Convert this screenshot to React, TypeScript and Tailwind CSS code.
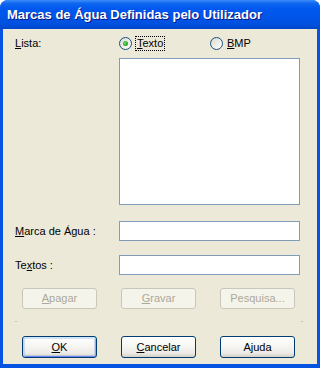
import React from "react";

const font = { fontFamily: '"Liberation Sans", Arial, sans-serif' };

function Radio({ checked }: { checked?: boolean }) {
  return (
    <span className="relative inline-flex h-[13px] w-[13px] shrink-0 items-center justify-center rounded-full border border-[#1C5180] bg-[linear-gradient(135deg,#D9D9D1_0%,#F0F0EA_55%,#FFFFFF_100%)]">
      {checked && (
        <span className="h-[5px] w-[5px] rounded-full bg-[radial-gradient(circle_at_40%_40%,#6CDB6C_0%,#21A121_70%,#1A8A1A_100%)]" />
      )}
    </span>
  );
}

function Btn({
  children,
  disabled,
  def,
  h = "h-[21px]",
}: {
  children: React.ReactNode;
  disabled?: boolean;
  def?: boolean;
  h?: string;
}) {
  if (disabled) {
    return (
      <div
        className={`flex w-[75px] ${h} items-center justify-center rounded-[3px] border border-[#C9C7BA] bg-[#F5F4EA] text-[11px] text-[#ACA899]`}
      >
        {children}
      </div>
    );
  }
  return (
    <div
      className={`flex w-[75px] ${h} items-center justify-center rounded-[3px] border border-[#003C74] bg-[linear-gradient(180deg,#FFFFFF_0%,#F7F7F4_40%,#ECEBE6_80%,#D6D0C5_100%)] text-[11px] text-black ${
        def
          ? "shadow-[inset_0_1px_0_#CEE7FF,inset_1px_0_0_#BCD4F6,inset_-1px_0_0_#89ADE4,inset_0_-1px_0_#6982EE,inset_0_0_0_2px_rgba(137,173,228,0.35)]"
          : ""
      }`}
    >
      {children}
    </div>
  );
}

export default function App() {
  return (
    <div className="h-[368px] w-[320px] bg-white" style={font}>
      <div className="flex h-[368px] w-[320px] flex-col overflow-hidden rounded-t-[8px] bg-[#0553E1]">
        <div className="flex h-[29px] shrink-0 items-center bg-[linear-gradient(180deg,#3C8CF8_0%,#0E66F0_12%,#0058EE_30%,#0055E8_60%,#0050DD_85%,#0046C8_100%)] pl-[7px]">
          <span
            className="font-bold text-white [text-shadow:1px_1px_0_#0A1883]"
            style={{ fontFamily: '"Liberation Sans", Arial, sans-serif', fontSize: "13px" }}
          >
            Marcas de Água Definidas pelo Utilizador
          </span>
        </div>
        <div className="mx-[3px] mb-[4px] flex flex-1 flex-col bg-[#ECE9D8] pl-[12px] pt-[6px] text-[11px] text-black">
          <div className="flex h-[17px] items-center">
            <div className="w-[104px]">
              <u>L</u>ista:
            </div>
            <div className="flex w-[91px] items-center">
              <Radio checked />
              <span className="ml-[3px] border border-dotted border-black px-[1px] leading-[13px]">
                <u>T</u>exto
              </span>
            </div>
            <div className="flex items-center">
              <Radio />
              <span className="ml-[4px] leading-[13px]">
                <u>B</u>MP
              </span>
            </div>
          </div>
          <div className="ml-[104px] mt-[6px] h-[147px] w-[181px] border border-[#7F9DB9] bg-white" />
          <div className="mt-[16px] flex h-[20px] items-center">
            <div className="w-[104px]">
              <u>M</u>arca de Água :
            </div>
            <div className="h-[20px] w-[181px] border border-[#7F9DB9] bg-white" />
          </div>
          <div className="mt-[14px] flex h-[20px] items-center">
            <div className="w-[104px]">
              Te<u>x</u>tos :
            </div>
            <div className="h-[20px] w-[181px] border border-[#7F9DB9] bg-white" />
          </div>
          <div className="ml-[7px] mt-[13px] flex gap-[24px]">
            <Btn disabled>
              <span>
                <u>A</u>pagar
              </span>
            </Btn>
            <Btn disabled>
              <span>
                <u>G</u>ravar
              </span>
            </Btn>
            <Btn disabled>Pesquisa...</Btn>
          </div>
          <div className="mt-[12px] flex h-[1px] w-[288px] justify-between bg-[#EAE7D6]">
            <span className="h-[1px] w-[2px] bg-[#C4C1AF]" />
            <span className="h-[1px] w-[2px] bg-[#C4C1AF]" />
          </div>
          <div className="ml-[7px] mt-[14px] flex gap-[24px]">
            <Btn def h="h-[22px]">
              <span>
                <u>O</u>K
              </span>
            </Btn>
            <Btn h="h-[22px]">
              <span>
                <u>C</u>ancelar
              </span>
            </Btn>
            <Btn h="h-[22px]">Ajuda</Btn>
          </div>
        </div>
      </div>
    </div>
  );
}
